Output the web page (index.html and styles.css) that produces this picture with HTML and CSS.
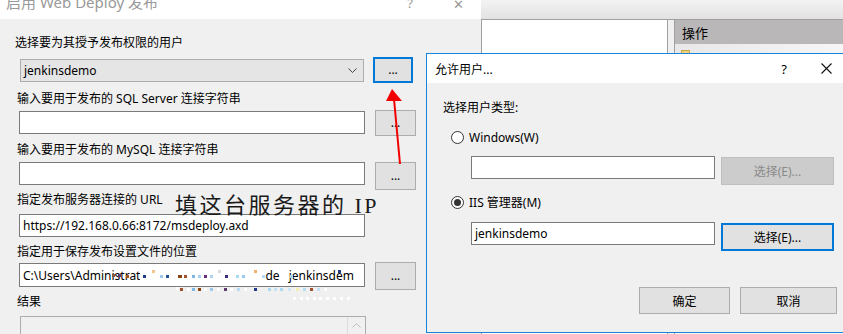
FILE: index.html
```html
<!DOCTYPE html>
<html lang="zh-CN">
<head>
    <meta charset="UTF-8">
    <title>启用 Web Deploy 发布</title>
    <link rel="stylesheet" href="styles.css">
</head>
<body>

<div class="desk">

    <!-- 背景里的 IIS 管理器 -->
    <div class="app">
        <div class="appBar"></div>
        <div class="appBody">
            <div class="appMain"></div>
            <div class="appSide">
                <div class="sideHead">操作</div>
                <div class="sideRow"><span class="sideIcon"></span></div>
            </div>
        </div>
    </div>

    <!-- 启用 Web Deploy 发布 -->
    <div class="dlg deploy">
        <div class="deployTitle">
            <span class="deployName">启用 Web Deploy 发布</span>
            <span class="deployHelp">?</span>
            <span class="deployClose">✕</span>
        </div>
        <div class="deployBody">
            <div class="lbl lbl1">选择要为其授予发布权限的用户</div>
            <div class="field field1">
                <div class="combo">
                    <span>jenkinsdemo</span>
                    <svg class="chev" width="9" height="5" viewBox="0 0 9 5"><polyline points="0.5,0.5 4.5,4.5 8.5,0.5" fill="none" stroke="#444" stroke-width="1"/></svg>
                </div>
                <button class="btn dots focus">...</button>
            </div>

            <div class="lbl lbl2">输入要用于发布的 SQL Server 连接字符串</div>
            <div class="field field2">
                <div class="txt"></div>
                <button class="btn dots">...</button>
            </div>

            <div class="lbl lbl3">输入要用于发布的 MySQL 连接字符串</div>
            <div class="field field3">
                <div class="txt"></div>
                <button class="btn dots tall">...</button>
            </div>

            <div class="lbl lbl4">指定发布服务器连接的 URL</div>
            <div class="field field4">
                <div class="txt">https://192.168.0.66:8172/msdeploy.axd</div>
            </div>

            <div class="lbl lbl5">指定用于保存发布设置文件的位置</div>
            <div class="field field5">
                <div class="txt path">
                    <span>C:\Users\Administrat</span><span class="mask"></span><span>de</span><span class="mask small"></span><span>jenkinsdem</span>
                </div>
                <button class="btn dots tall">...</button>
            </div>

            <div class="lbl lbl6">结果</div>
            <div class="result">
                <div class="scroll">
                    <svg width="9" height="5" viewBox="0 0 9 5"><polyline points="0.5,4.5 4.5,0.5 8.5,4.5" fill="none" stroke="#bdbdbd" stroke-width="1"/></svg>
                </div>
            </div>
        </div>
    </div>

    <!-- 打码的像素块 -->
    <svg class="mosaic" width="270" height="42" viewBox="100 262 270 42">
        <rect x="112" y="274" width="3" height="3" fill="#8a5a3c"/>
        <rect x="118" y="274" width="3" height="3" fill="#5b3a6e"/>
        <rect x="126" y="275" width="3" height="3" fill="#a0522d"/>
        <rect x="143" y="275" width="3" height="3" fill="#1f3a8a"/>
        <rect x="152" y="270" width="3" height="3" fill="#f4c48e"/>
        <rect x="160" y="275" width="3" height="3" fill="#9ec9ea"/>
        <rect x="166" y="275" width="3" height="3" fill="#1e4fa0"/>
        <rect x="178" y="275" width="4" height="3" fill="#8b4513"/>
        <rect x="184" y="275" width="3" height="3" fill="#a0522d"/>
        <rect x="192" y="275" width="3" height="3" fill="#7fb8e6"/>
        <rect x="198" y="275" width="3" height="3" fill="#a8d0f0"/>
        <rect x="204" y="275" width="3" height="3" fill="#6b2f7a"/>
        <rect x="210" y="275" width="3" height="3" fill="#b0d4f0"/>
        <rect x="218" y="270" width="3" height="3" fill="#dcdcdc"/>
        <rect x="225" y="275" width="3" height="3" fill="#3a2a80"/>
        <rect x="236" y="275" width="3" height="3" fill="#a8d8f4"/>
        <rect x="242" y="275" width="3" height="3" fill="#9cc8ec"/>
        <rect x="254" y="270" width="3" height="3" fill="#f4b070"/>
        <rect x="262" y="275" width="3" height="3" fill="#b6dcf4"/>
        <rect x="290" y="275" width="3" height="3" fill="#a6d4f2"/>
        <rect x="338" y="270" width="3" height="3" fill="#1f3a8a"/>
        <rect x="176" y="287" width="3" height="3" fill="#fff"/>
        <rect x="180" y="288" width="3" height="3" fill="#a0522d"/>
        <rect x="187" y="288" width="3" height="3" fill="#fff"/>
        <rect x="192" y="288" width="3" height="3" fill="#7fb8e6"/>
        <rect x="198" y="288" width="3" height="3" fill="#8b4513"/>
        <rect x="204" y="288" width="3" height="3" fill="#fff"/>
        <rect x="210" y="288" width="3" height="3" fill="#9ec9ea"/>
        <rect x="217" y="288" width="3" height="3" fill="#fff"/>
        <rect x="224" y="288" width="3" height="3" fill="#5b3a6e"/>
        <rect x="230" y="288" width="3" height="3" fill="#fff"/>
        <rect x="237" y="288" width="3" height="3" fill="#b6dcf4"/>
        <rect x="244" y="288" width="3" height="3" fill="#fff"/>
        <rect x="254" y="288" width="3" height="3" fill="#1f3a8a"/>
        <rect x="268" y="288" width="3" height="3" fill="#a8d8f4"/>
        <rect x="274" y="288" width="3" height="3" fill="#c4e2f6"/>
        <rect x="280" y="288" width="3" height="3" fill="#a8d8f4"/>
        <rect x="288" y="288" width="3" height="3" fill="#cfe6f6"/>
        <rect x="296" y="288" width="3" height="3" fill="#f6eeb0"/>
        <rect x="303" y="288" width="3" height="3" fill="#b6dcf4"/>
        <rect x="310" y="288" width="3" height="3" fill="#a0522d"/>
        <rect x="317" y="288" width="3" height="3" fill="#c4e2f6"/>
        <rect x="324" y="288" width="3" height="3" fill="#fff"/>
        <rect x="293" y="297" width="3" height="3" fill="#fff"/>
        <rect x="300" y="297" width="3" height="3" fill="#fff"/>
        <rect x="306" y="297" width="3" height="3" fill="#fff"/>
        <rect x="313" y="297" width="3" height="3" fill="#fff"/>
        <rect x="319" y="297" width="3" height="3" fill="#fff"/>
        <rect x="326" y="297" width="3" height="3" fill="#fff"/>
        <rect x="333" y="297" width="3" height="3" fill="#fff"/>
        <rect x="340" y="297" width="3" height="3" fill="#fff"/>
        <rect x="347" y="297" width="3" height="3" fill="#fff"/>
    </svg>

    <!-- 红色箭头 -->
    <svg class="arrow" width="30" height="90" viewBox="380 80 30 90">
        <line x1="400" y1="164" x2="394" y2="99" stroke="#f20000" stroke-width="2"/>
        <polygon points="392,89 386,101 402,101" fill="#f20000"/>
    </svg>

    <!-- 手写的说明 -->
    <div class="note">填这台服务器的 IP</div>

    <!-- 允许用户... -->
    <div class="dlg user">
        <div class="userTitle">
            <span class="userName">允许用户...</span>
            <span class="userHelp">?</span>
            <svg class="userClose" width="11" height="11" viewBox="0 0 11 11"><path d="M0.5 0.5 L10.5 10.5 M10.5 0.5 L0.5 10.5" stroke="#111" stroke-width="1.1"/></svg>
        </div>
        <div class="userBody">
            <div class="userLbl">选择用户类型:</div>

            <div class="radioRow">
                <span class="radio"></span>
                <span>Windows(W)</span>
            </div>
            <div class="pick">
                <div class="txt wide"></div>
                <button class="btn choose disabled">选择(E)...</button>
            </div>

            <div class="radioRow second">
                <span class="radio checked"></span>
                <span>IIS 管理器(M)</span>
            </div>
            <div class="pick second">
                <div class="txt wide">jenkinsdemo</div>
                <button class="btn choose focus">选择(E)...</button>
            </div>

            <div class="userBtns">
                <button class="btn ok">确定</button>
                <button class="btn cancel">取消</button>
            </div>
        </div>
    </div>

</div>

</body>
</html>
```

FILE: styles.css
```css
body{
    margin: 0;
    font-family: "Noto Sans", "Noto Sans CJK SC", sans-serif;
    font-size: 12px;
    color: #000;
}

.desk{
    position: relative;
    width: 843px;
    height: 334px;
    overflow: hidden;
    background: #f0f0f0;
}

/* 背景程序 */
.app{
    position: absolute;
    left: 481px;
    top: 0;
    width: 362px;
    height: 334px;
    display: flex;
    flex-direction: column;
}

.appBar{
    height: 19px;
    background: linear-gradient(#f3f3f3, #e2e2e2);
    border-bottom: 1px solid #a0a0a0;
}

.appBody{
    flex: 1;
    display: flex;
}

.appMain{
    width: 185px;
    background: #fff;
    border-right: 1px solid #a0a0a0;
    border-left: 1px solid #a0a0a0;
    margin-right: 6px;
}

.appSide{
    flex: 1;
    border-left: 1px solid #a0a0a0;
    background: #f7f7f7;
}

.sideHead{
    height: 24px;
    line-height: 26px;
    padding-left: 7px;
    background: #b9b7b8;
    font-size: 13px;
}

.sideRow{
    height: 12px;
    background: linear-gradient(90deg, #e8e8e8, #f6f6f6);
    padding: 6px 0 0 6px;
}

.sideIcon{
    display: block;
    width: 7px;
    height: 8px;
    background: #f1d27a;
    border: 1px solid #c9a64a;
}

/* 通用窗口 */
.dlg{
    position: absolute;
    box-sizing: border-box;
    background: #f0f0f0;
}

.txt{
    box-sizing: border-box;
    height: 23px;
    background: #fff;
    border: 1px solid #7a7a7a;
    padding: 0 3px;
    line-height: 21px;
    white-space: nowrap;
    overflow: hidden;
}

.btn{
    box-sizing: border-box;
    margin: 0;
    padding: 0;
    font: inherit;
    color: #000;
    background: #e1e1e1;
    border: 1px solid #adadad;
}

.btn.focus{
    border: 2px solid #0078d7;
}

/* 启用 Web Deploy 发布 */
.deploy{
    left: 0;
    top: 0;
    width: 481px;
    height: 334px;
}

.deployTitle{
    height: 19px;
    background: #fff;
    display: flex;
    color: #999;
    overflow: hidden;
}

.deployName{
    font-size: 15px;
    line-height: 15px;
    margin: -5px 0 0 6px;
}

.deployHelp{
    margin: -6px 0 0 auto;
    font-size: 13px;
}

.deployClose{
    margin: -5px 17px 0 40px;
    font-size: 13px;
}

.deployBody{
    padding: 16px 0 0 17px;
}

.lbl{
    line-height: 16px;
    height: 16px;
    white-space: nowrap;
}

.lbl1{ margin-left: -2px; }
.lbl2{ margin-top: 8px; }
.lbl3{ margin-top: 6px; }
.lbl4{ margin-top: 2px; }
.lbl5{ margin-top: 7px; }
.lbl6{ margin-top: 4px; }

.field{
    display: flex;
    align-items: flex-start;
    margin-left: 2px;
}

.field .txt{
    width: 346px;
    margin-right: 10px;
}

.field1{ margin-top: 6px; align-items: center; }
.field2{ margin-top: 3px; }
.field2 .txt{ margin-top: 1px; }
.field3{ margin-top: 4px; }
.field4{ margin-top: 6px; }
.field5{ margin-top: 2px; }
.field5 .txt{ margin-top: 1px; height: 24px; }

.combo{
    box-sizing: border-box;
    width: 344px;
    height: 23px;
    margin: 0 9px 0 1px;
    background: #e5e5e5;
    border: 1px solid #adadad;
    display: flex;
    align-items: center;
    padding: 0 0 0 3px;
}

.combo span{
    flex: 1;
}

.chev{
    margin-right: 6px;
}

.dots{
    width: 41px;
    height: 26px;
    line-height: 18px;
}

.dots.focus{
    width: 40px;
}

.dots.tall{
    height: 28px;
}

.path{
    display: flex;
    align-items: center;
    padding-left: 3px;
}

.mask{
    width: 125px;
    height: 100%;
    background: #fff;
}

.mask.small{
    width: 9px;
}

.result{
    box-sizing: border-box;
    width: 346px;
    height: 40px;
    margin: 6px 0 0 3px;
    border: 1px solid #adadad;
    background: #f0f0f0;
    display: flex;
    justify-content: flex-end;
}

.scroll{
    width: 17px;
    border-left: 1px solid #dcdcdc;
    display: flex;
    justify-content: center;
    padding-top: 6px;
}

.mosaic{
    position: absolute;
    left: 100px;
    top: 262px;
}

.arrow{
    position: absolute;
    left: 380px;
    top: 80px;
}

.note{
    position: absolute;
    left: 175px;
    top: 187px;
    font-family: "Liberation Serif", "Noto Sans CJK SC", serif;
    font-size: 22px;
    letter-spacing: 2.5px;
    color: #1a1a1a;
    white-space: nowrap;
}

/* 允许用户... */
.user{
    left: 426px;
    top: 53px;
    width: 420px;
    height: 280px;
    border: 1px solid #1883d7;
}

.userTitle{
    height: 29px;
    background: #fff;
    display: flex;
    align-items: center;
    padding: 0 13px 0 8px;
}

.userHelp{
    margin-left: auto;
    font-size: 13px;
}

.userClose{
    margin-left: 34px;
}

.userBody{
    padding: 17px 0 0 16px;
}

.userLbl{
    line-height: 16px;
}

.radioRow{
    display: flex;
    align-items: center;
    height: 16px;
    margin: 13px 0 0 8px;
}

.radioRow.second{
    margin-top: 9px;
}

.radio{
    box-sizing: border-box;
    width: 13px;
    height: 13px;
    border: 1px solid #333;
    border-radius: 50%;
    background: #fff;
    margin-right: 5px;
    display: flex;
    align-items: center;
    justify-content: center;
}

.radio.checked::after{
    content: "";
    width: 7px;
    height: 7px;
    border-radius: 50%;
    background: #333;
}

.pick{
    display: flex;
    align-items: flex-start;
    margin: 11px 0 0 28px;
}

.pick.second{
    margin-top: 12px;
}

.txt.wide{
    width: 244px;
    margin-right: 6px;
}

.choose{
    width: 113px;
    height: 28px;
    margin-top: 1px;
}

.choose.disabled{
    background: #cccccc;
    border-color: #bfbfbf;
    color: #8a8a8a;
}

.userBtns{
    display: flex;
    justify-content: flex-end;
    gap: 10px;
    margin-top: 36px;
    padding-right: 8px;
}

.ok{
    width: 91px;
    height: 27px;
}

.cancel{
    width: 97px;
    height: 27px;
}
```
